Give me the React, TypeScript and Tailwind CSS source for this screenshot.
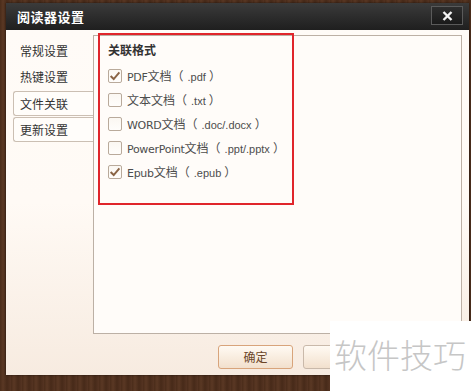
import React from "react";

const cjk = "font-['Tahoma','Liberation_Sans','Noto_Sans_CJK_SC',sans-serif]";

const formats = [
  { latin: "PDF", zh: "文档", ext: ".pdf", checked: true },
  { latin: "", zh: "文本文档", ext: ".txt", checked: false },
  { latin: "WORD", zh: "文档", ext: ".doc/.docx", checked: false },
  { latin: "PowerPoint", zh: "文档", ext: ".ppt/.pptx", checked: false },
  { latin: "Epub", zh: "文档", ext: ".epub", checked: true },
];

function Check({ checked }: { checked: boolean }) {
  return (
    <div className="w-[14px] h-[14px] shrink-0 rounded-[2px] border border-[#b9aa9b] bg-gradient-to-b from-[#fbf7f2] to-[#fffdfb] flex items-center justify-center">
      {checked && (
        <svg width="12" height="12" viewBox="0 0 11 11">
          <path d="M1.5 5.5 L4.3 8.3 L9.5 2.2" fill="none" stroke="#8a6445" strokeWidth="1.8" />
        </svg>
      )}
    </div>
  );
}

export default function App() {
  return (
    <div className={`relative w-[471px] h-[391px] overflow-hidden bg-[#4d2f1d] bg-[repeating-linear-gradient(90deg,#4a2c1a_0px,#5a3824_3px,#472a19_7px,#553422_11px)] pt-[3px] pl-[6px] ${cjk}`}>
      <div className="w-[463px] h-[372px] flex flex-col shadow-[0_0_2px_rgba(0,0,0,0.6)]">
        {/* title bar */}
        <div className="h-[27px] shrink-0 bg-gradient-to-b from-[#3b3b3b] to-[#1f1f1f] flex items-center justify-between pl-[11px] pr-[6px]">
          <span className="text-white text-[13px] font-bold font-['Noto_Sans_CJK_SC',sans-serif] tracking-[0.5px]">阅读器设置</span>
          <div className="w-[32px] h-[19px] -mt-[2px] border border-[#5a5a5a] bg-gradient-to-b from-[#2e2e2e] to-[#1a1a1a] flex items-center justify-center">
            <svg width="11" height="10" viewBox="0 0 11 10">
              <path d="M1.5 1 L9.5 9 M9.5 1 L1.5 9" stroke="#f2f2f2" strokeWidth="2.4" />
            </svg>
          </div>
        </div>

        {/* body */}
        <div className="flex-1 flex flex-col bg-gradient-to-b from-[#fffbf7] via-[#fffaf5] to-[#f7ebe0] pt-[5px] pr-[7px]">
          <div className="flex">
            {/* tabs */}
            <div className="w-[87px] shrink-0 pl-[7px] flex flex-col text-[12px] text-[#333] font-['Noto_Sans_CJK_SC',sans-serif]">
              <div className="h-[26px] mt-[3px] flex items-center pl-[7px]">常规设置</div>
              <div className="h-[26px] flex items-center pl-[7px]">热键设置</div>
              <div className="h-[25px] mt-[1px] flex items-center pl-[6px] border border-r-0 border-[#cbbfb3] rounded-l-[3px] bg-[#fffdfa]">文件关联</div>
              <div className="h-[25px] mt-[1px] flex items-center pl-[6px] border border-r-0 border-[#cbbfb3] rounded-l-[3px] bg-[#fffdfa]">更新设置</div>
            </div>

            {/* panel */}
            <div className="relative w-[370px] h-[299px] border border-[#bcb0a5] bg-[#fffcf9] pl-[14px] pt-[7px]">
              <div className="text-[12px] leading-[14px] font-bold text-[#333] font-['Noto_Sans_CJK_SC',sans-serif]">关联格式</div>
              <div className="mt-[7px] flex flex-col">
                {formats.map((f) => (
                  <div key={f.ext} className="h-[24px] flex items-center gap-[5px]">
                    <Check checked={f.checked} />
                    <span className="text-[#4d4d4d] whitespace-nowrap">
                      <span className="text-[11px] font-['DejaVu_Sans',sans-serif] tracking-[-0.3px]">{f.latin}</span>
                      <span className="text-[12px] font-['Noto_Sans_CJK_SC',sans-serif]">{f.zh}（</span>
                      <span className="text-[11px] font-['Liberation_Sans',sans-serif] ml-[4px] mr-[3px]">{f.ext}</span>
                      <span className="text-[12px] font-['Noto_Sans_CJK_SC',sans-serif]">）</span>
                    </span>
                  </div>
                ))}
              </div>
              {/* red highlight */}
              <div className="absolute left-[4px] top-[-3px] w-[196px] h-[172px] border-2 border-[#e0252b]" />
            </div>
          </div>

          {/* buttons */}
          <div className="flex gap-[10px] pl-[212px] mt-[11px]">
            <button className="w-[75px] h-[24px] rounded-[3px] border border-[#d8a47b] bg-gradient-to-b from-[#fffaf3] to-[#f2e0cd] text-[12px] text-[#6b4528] font-['Noto_Sans_CJK_SC',sans-serif]">确定</button>
            <button className="w-[75px] h-[24px] rounded-[3px] border border-[#c9b9aa] bg-gradient-to-b from-[#fffaf3] to-[#f2e0cd]" />
          </div>
        </div>
      </div>

      {/* watermark */}
      <div className="absolute left-[330px] top-[321px] right-0 bottom-0 bg-white flex items-center pl-[4px]">
        <span className="text-[33px] leading-none text-[#c6c6c6] font-['Noto_Sans_CJK_SC',sans-serif] font-light -mt-[4px]">软件技巧</span>
      </div>
    </div>
  );
}
